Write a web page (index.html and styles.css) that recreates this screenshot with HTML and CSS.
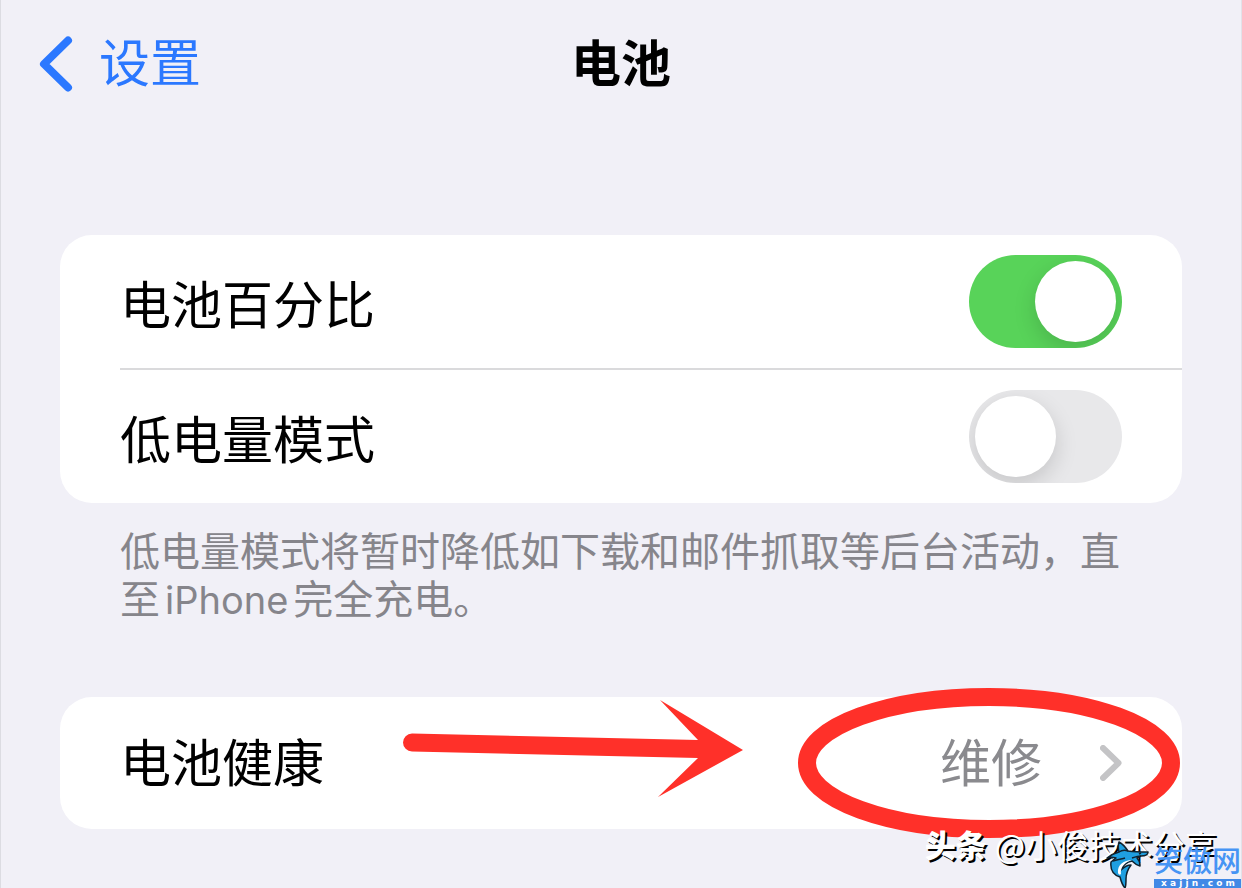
FILE: index.html
```html
<!DOCTYPE html>
<html lang="zh-CN">
<head>
    <meta charset="UTF-8">
    <meta name="viewport" content="width=device-width, initial-scale=1.0">
    <title>电池</title>
    <link rel="stylesheet" href="styles.css">
</head>
<body>
<header class="nav-bar">
    <a class="btn-back" href="#">
        <svg class="back-icon" viewBox="0 0 34 56" aria-hidden="true">
            <path d="M29 4.500L5 28L29 51.500"/>
        </svg>
        <span>设置</span>
    </a>
    <h1>电池</h1>
</header>

<main>
    <div class="card">
        <div class="row">
            <label for="percentage">电池百分比</label>
            <input class="switch" type="checkbox" id="percentage" checked>
        </div>
        <div class="row">
            <label for="lowPower">低电量模式</label>
            <input class="switch" type="checkbox" id="lowPower">
        </div>
    </div>
    <p class="note">低电量模式将暂时降低如下载和邮件抓取等后台活动，直至<span class="latin">iPhone</span>完全充电。</p>

    <div class="card">
        <a class="row row-link" href="#">
            <span>电池健康</span>
            <span class="value">维修</span>
            <svg class="chevron" viewBox="0 0 22 36" aria-hidden="true">
                <path d="M3 3L18.500 18L3 33"/>
            </svg>
        </a>
        <svg class="mark-arrow" viewBox="0 0 340 98" aria-hidden="true">
            <path d="M9 33.500L295 40L257 0L340 50L255 97L295 58L9 51.500A9 9 0 0 1 9 33.500Z"/>
        </svg>
        <svg class="mark-circle" viewBox="0 0 382 150" aria-hidden="true">
            <ellipse cx="191" cy="75" rx="182" ry="66"/>
        </svg>
    </div>
</main>

<!-- Filigranes -->
<div class="author"><b>头条</b><span>@小俊技术分享</span></div>
<div class="site">
    <svg class="shark" viewBox="0 0 48 50" aria-hidden="true">
        <path class="shark-body" d="M3 20C7 17 11 15 15 14C14 10 14 7 15 4C19 6 22 10 24 13C31 14 37 14 44 14C44 17 41 18 37 18L33 20C35 22 36 25 36 28C32 27 30 25 28 23C23 24 19 27 17 32C20 29 23 27 27 27C24 31 22 36 22 41C22 45 22 48 21 50C18 47 17 43 16 39C10 37 6 32 7 24L12 20C9 19 6 19 3 20Z"/>
        <path class="shark-belly" d="M28 22C20 22 13 27 14 35C15 37 16 37 17 36C16 29 21 24 28 22Z"/>
        <path class="shark-line" d="M15 14C18 12 21 12 24 13M9 23C14 21 18 21 21 20M37 18C34 18 31 19 28 20M35 16L37 15"/>
    </svg>
    <div class="site-text">
        <span class="site-name">笑傲网</span>
        <span class="site-url">x a j j n . c o m</span>
    </div>
</div>
</body>
</html>
```
FILE: styles.css
```css
* {
    box-sizing: border-box;
}

body {
    position: relative;
    min-height: 100vh;
    margin: 0;
    border-left: 1px solid #dcdce2;
    border-right: 1px solid #e2e2e9;
    background-color: #f1f0f7;
    color: #000;
    font-family: "Noto Sans CJK SC", sans-serif;
    font-size: 51px;
    overflow-x: hidden;
}

a {
    color: inherit;
    text-decoration: none;
}

.nav-bar {
    display: grid;
    grid-template-columns: 1fr auto 1fr;
    align-items: center;
    height: 128px;
    padding: 0 38px;
}

.btn-back {
    display: flex;
    align-items: center;
    gap: 26px;
    color: #2b78ff;
}

.btn-back span,
h1 {
    padding-bottom: 8px;
}

.back-icon {
    width: 34px;
    height: 56px;
    fill: none;
    stroke: #2b78ff;
    stroke-width: 8;
    stroke-linecap: round;
    stroke-linejoin: round;
}

h1 {
    margin: 0;
    font-size: 50px;
    font-weight: bold;
}

main {
    padding: 107px 59px 59px;
}

.card {
    position: relative;
    border-radius: 32px;
    background-color: #fff;
}

.row {
    display: flex;
    align-items: center;
    justify-content: space-between;
    height: 133px;
    margin-left: 60px;
    padding-right: 60px;
}

.row + .row {
    height: 135px;
    border-top: 2px solid #dadadc;
}

.row-link {
    height: 132px;
    line-height: 68px;
}

.row-link span {
    padding-bottom: 6px;
}

.value {
    margin-left: auto;
    margin-right: 58px;
    color: #8a8a8e;
}

.chevron {
    width: 22px;
    height: 36px;
    fill: none;
    stroke: #c4c4c6;
    stroke-width: 6;
    stroke-linecap: round;
    stroke-linejoin: round;
}

.switch {
    appearance: none;
    width: 153px;
    height: 93px;
    margin: 0;
    padding: 6px;
    border-radius: 47px;
    background-color: #e8e8ea;
    overflow: hidden;
    cursor: pointer;
}

.switch::before {
    content: "";
    display: block;
    width: 81px;
    height: 81px;
    border-radius: 50%;
    background-color: #fff;
    box-shadow: 0 8px 22px rgba(0, 0, 0, 0.15);
}

.switch:checked {
    background-color: #58d359;
}

.switch:checked::before {
    margin-left: auto;
}

.note {
    margin: 0 0 76px;
    padding: 22px 60px 0;
    color: #86858b;
    font-size: 40px;
    line-height: 48px;
}

.latin {
    margin: 0 5px;
    font-family: Inter, sans-serif;
    font-size: 38px;
    line-height: 40px;
}

/* Annotations rouges par-dessus la carte */
.mark-arrow {
    position: absolute;
    top: 3px;
    left: 343px;
    width: 340px;
    height: 98px;
    fill: #ff3029;
}

.mark-circle {
    position: absolute;
    top: -9px;
    right: 2px;
    width: 382px;
    height: 150px;
    fill: none;
    stroke: #ff3029;
    stroke-width: 18;
    pointer-events: none;
}

.author {
    position: absolute;
    right: 24px;
    bottom: 22px;
    display: flex;
    gap: 8px;
    color: #fff;
    font-size: 32px;
    line-height: 44px;
    white-space: nowrap;
    text-shadow: 2px 2px 0 #000;
}

.author b {
    font-size: 31px;
    font-weight: 900;
}

.site {
    position: absolute;
    right: -1px;
    bottom: 0;
    display: flex;
    align-items: flex-end;
    gap: 2px;
}

.shark {
    width: 48px;
    height: 50px;
    stroke: #10222e;
    stroke-width: 1.5;
    stroke-linejoin: round;
}

.shark-body {
    fill: #1f9fe0;
}

.shark-belly {
    fill: #fff;
    stroke: none;
}

.shark-line {
    fill: none;
}

.site-text {
    display: flex;
    flex-direction: column;
    width: 88px;
    color: #4694f4;
}

.site-name {
    padding-bottom: 4px;
    font-size: 29px;
    font-weight: 500;
    line-height: 32px;
}

.site-url {
    background-color: #4189e6;
    color: #fff;
    font-family: "DejaVu Sans", sans-serif;
    font-size: 9px;
    font-weight: bold;
    line-height: 9px;
    text-align: center;
    white-space: nowrap;
}
```
